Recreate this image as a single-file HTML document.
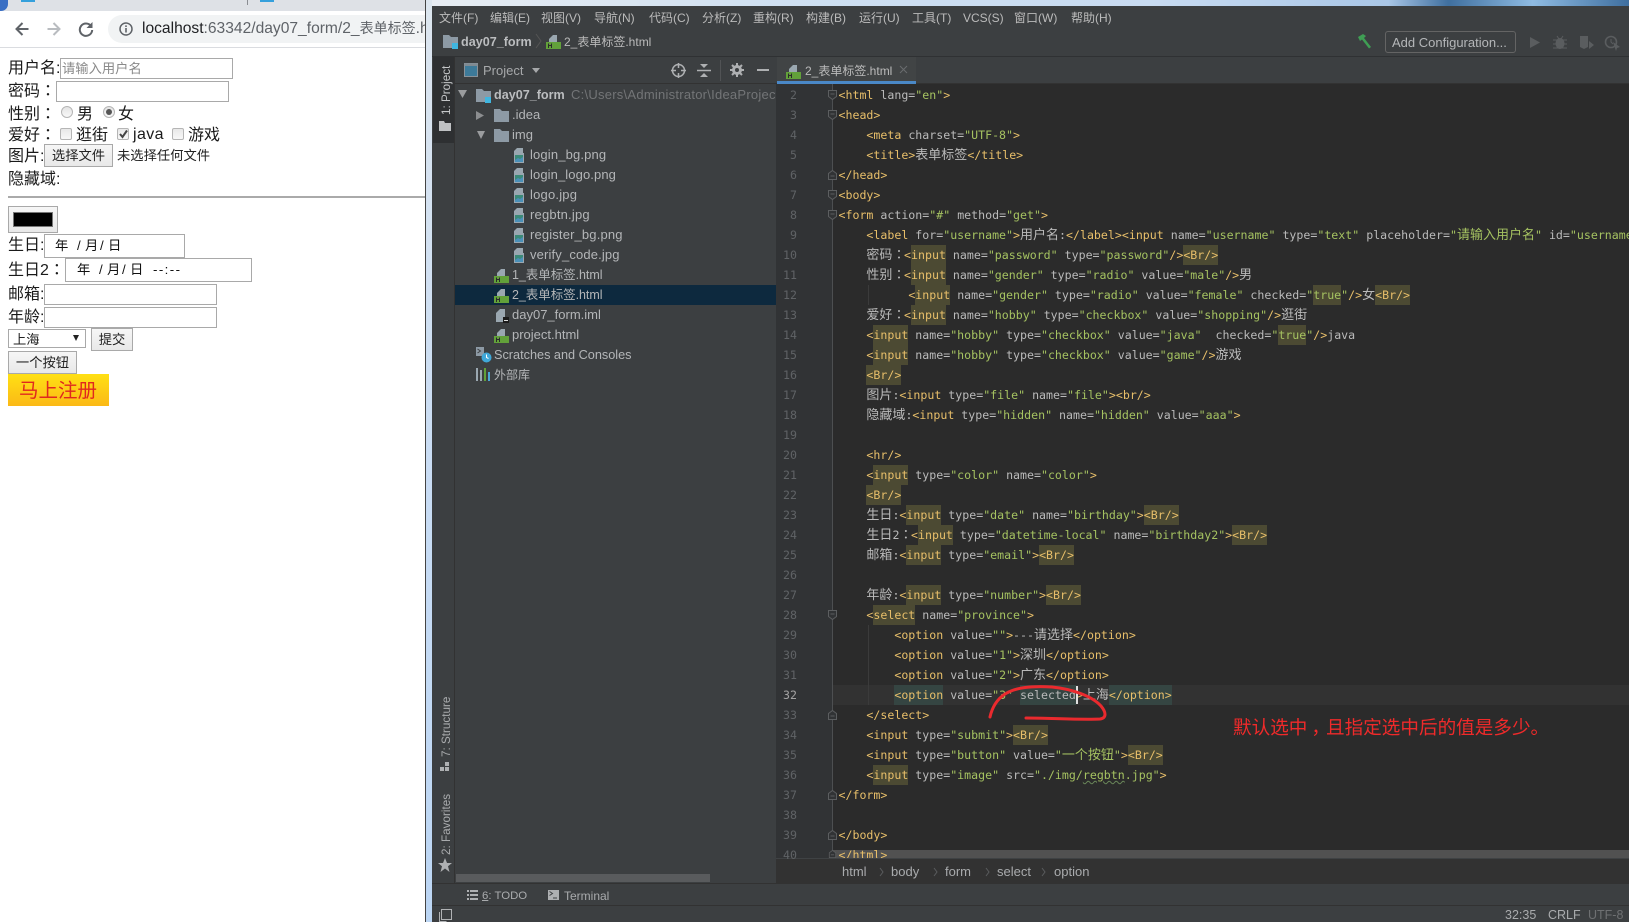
<!DOCTYPE html>
<html><head><meta charset="utf-8"><title>2_表单标签</title>
<style>
html,body{margin:0;padding:0;width:1629px;height:922px;overflow:hidden;background:#3c3f41}
div,span,svg{position:absolute}
body{font-family:"Liberation Sans","Noto Sans CJK SC",sans-serif}
#root{left:0;top:0;width:1629px;height:922px;overflow:hidden;background:#3c3f41}
.t{white-space:pre;line-height:20px;height:20px}
i{font-style:normal}
x{font-family:"Noto Sans CJK TC",sans-serif;line-height:0}
/* browser */
#br{left:0;top:0;width:426px;height:922px;background:#fff;overflow:hidden;color:#222}
.f{font-size:16px;white-space:pre;line-height:20px;height:20px;color:#1a1a1a}
.in{background:#fff;border:1px solid #a9a9a9;box-sizing:border-box}
.bt{background:linear-gradient(#f6f6f6,#e8e8e8);border:1px solid #a9a9a9;box-sizing:border-box;font-size:13.3px;text-align:center;color:#222;white-space:pre}
.rd{width:12px;height:12px;border-radius:50%;border:1px solid #b5b5b5;box-sizing:border-box;background:linear-gradient(#e4e4e4,#f8f8f8)}
.cb{width:12px;height:12px;border-radius:2px;border:1px solid #b5b5b5;box-sizing:border-box;background:linear-gradient(#e8e8e8,#f8f8f8)}
.dt{font-size:13.3px;line-height:20px;white-space:pre;color:#111}
/* ide */
.ui{font-size:12.5px;color:#afb1b3;white-space:pre;line-height:20px;height:20px}
.m{font-size:12px;top:8px;color:#bbb;white-space:pre;line-height:20px;height:20px}
.tr{font-size:13px;color:#b4b6b8;white-space:pre;line-height:20px;height:20px}
.hn{font-size:12.5px;letter-spacing:-.05px}
.sb{font-size:11.7px;color:#a9abad;white-space:pre;line-height:16px;transform-origin:0 0;transform:rotate(-90deg)}
/* code */
#cd{left:0;top:0;width:1629px;height:922px;overflow:hidden;pointer-events:none}
.l{left:838.5px;font:11.6px/20px "DejaVu Sans Mono","Noto Sans CJK SC",monospace;color:#bababa;white-space:pre;height:20px}
.ln{left:770px;width:27px;text-align:right;font:11.6px/20px "DejaVu Sans Mono",monospace;color:#606366;height:20px}
t{color:#e8bf6a}n{color:#bababa}v{color:#a5c261}
c{font:13px/0 "Noto Sans CJK SC",sans-serif;color:#bababa}
c x{letter-spacing:-1.4px}
h{background:#4c4a33;display:inline-block;height:20px;vertical-align:top}
g{background:#354542;display:inline-block;height:20px;vertical-align:top}
.fd{left:828px;width:9px;height:10px}
.ic{width:15px;height:15px}
</style></head>
<body>
<div id="root">
<svg width="0" height="0" style="left:0;top:0"><defs>
<symbol id="fo" viewBox="0 0 9 10"><path d="M.5.5h8v6l-4 3-4-3zM2.5 4h4" fill="#313335" stroke="#5c5e60"/></symbol>
<symbol id="fc" viewBox="0 0 9 10"><path d="M.5 9.500h8v-6l-4-3-4 3zM2.500 6h4" fill="#313335" stroke="#5c5e60"/></symbol>
<symbol id="hf" viewBox="0 0 15 15"><path d="M3 8V5l4-4h4v7z" fill="#9aa7b0"/><rect y="8" width="15" height="7" fill="#62a13a"/><path d="M2.500 9.500v4.500M5.500 9.500v4.500M2.500 11.500h3" stroke="#2b2b2b" stroke-width="1"/></symbol>
<symbol id="im" viewBox="0 0 15 15"><path d="M2 6V3l3-3h6v6z" fill="#9aa7b0"/><rect x="2" y="5" width="10" height="10" fill="#9aa7b0"/><rect x="3" y="7" width="8" height="7" fill="#3b8a78"/><path d="M3 12l3-2 2 1 3-2v5H3z" fill="#4a90b8"/></symbol>
<symbol id="fl" viewBox="0 0 15 15"><path d="M0 1h6l2 2h7v11H0z" fill="#8d9aa5"/></symbol>
</defs></svg>
<!-- browser window -->
<div id="br">
 <div style="left:0;top:0;width:426px;height:11px;background:#dee1e6"></div>
 <div style="left:-6px;top:-6px;width:14px;height:17px;background:#3a6fc4;border-radius:0 0 7px 0"></div>
 <div style="left:21px;top:0;width:14px;height:2px;background:#35a0dc"></div>
 <div style="left:260px;top:0;width:14px;height:2px;background:#35a0dc"></div>
 <div style="left:247px;top:0;width:1px;height:5px;background:#8a8d92"></div>
 <div style="left:0;top:47px;width:426px;height:1px;background:#dadce0"></div>
 <svg style="left:14px;top:21px" width="16" height="16" viewBox="0 0 16 16"><path d="M14.5 8H2.5M8.5 2L2.5 8l6 6" fill="none" stroke="#5f6368" stroke-width="2"/></svg>
 <svg style="left:46px;top:21px" width="16" height="16" viewBox="0 0 16 16"><path d="M1.5 8h12M7.5 2l6 6-6 6" fill="none" stroke="#b9bcc0" stroke-width="2"/></svg>
 <svg style="left:78px;top:21px" width="16" height="16" viewBox="0 0 16 16"><path d="M13 5A6.2 6.2 0 1 0 14.2 9" fill="none" stroke="#5f6368" stroke-width="2"/><path d="M14.5 1v6h-6z" fill="#5f6368"/></svg>
 <div style="left:108px;top:15px;width:330px;height:28px;border-radius:14px;background:#f1f3f4"></div>
 <svg style="left:119px;top:22px" width="14" height="14" viewBox="0 0 14 14"><circle cx="7" cy="7" r="6" fill="none" stroke="#5f6368" stroke-width="1.5"/><path d="M7 6v4.5M7 3.4v1.6" stroke="#5f6368" stroke-width="1.6"/></svg>
 <div style="left:142px;top:17px;font-size:15.6px;line-height:24px;color:#202124;white-space:pre;width:284px;overflow:hidden;height:24px">localhost<span style="position:static;color:#5f6368">:63342/day07_form/2_<i style="font-size:14px;line-height:0">表单标签</i>.html</span></div>

 <div class="f" style="left:8px;top:59px">用户名:</div>
 <div class="in" style="left:60px;top:58px;width:173px;height:21px"></div>
 <div style="left:62px;top:58px;font-size:13.3px;line-height:21px;color:#8a8a8a;white-space:pre">请输入用户名</div>
 <div class="f" style="left:8px;top:82px">密码<x>：</x></div>
 <div class="in" style="left:56px;top:81px;width:173px;height:21px"></div>
 <div class="f" style="left:8px;top:105px">性别<x>：</x></div>
 <div class="rd" style="left:61px;top:106px"></div>
 <div class="f" style="left:77px;top:105px">男</div>
 <div class="rd" style="left:103px;top:106px"></div>
 <div style="left:106px;top:109px;width:6px;height:6px;border-radius:50%;background:#555"></div>
 <div class="f" style="left:118px;top:105px">女</div>
 <div class="f" style="left:8px;top:126px">爱好<x>：</x></div>
 <div class="cb" style="left:60px;top:128px"></div>
 <div class="f" style="left:76px;top:126px">逛街</div>
 <div class="cb" style="left:117px;top:128px"></div>
 <svg style="left:118px;top:129px" width="11" height="10" viewBox="0 0 11 10"><path d="M2 5l2.5 3L9 1.5" fill="none" stroke="#444" stroke-width="2"/></svg>
 <div class="f" style="left:133px;top:125px;letter-spacing:.4px">java</div>
 <div class="cb" style="left:172px;top:128px"></div>
 <div class="f" style="left:188px;top:126px">游戏</div>
 <div class="f" style="left:8px;top:147px">图片:</div>
 <div class="bt" style="left:44px;top:144px;width:69px;height:23px;line-height:22px">选择文件</div>
 <div style="left:117px;top:146px;font-size:13.3px;line-height:20px;white-space:pre;color:#222">未选择任何文件</div>
 <div class="f" style="left:8px;top:170px">隐藏域:</div>
 <div style="left:8px;top:196px;width:418px;height:2px;background:#aaa"></div>
 <div class="bt" style="left:8px;top:206px;width:50px;height:27px"></div>
 <div style="left:13px;top:212px;width:40px;height:15px;background:#000;border:1px solid #777;box-sizing:border-box"></div>
 <div class="f" style="left:8px;top:236px">生日:</div>
 <div class="in" style="left:44px;top:234px;width:141px;height:24px"></div>
 <div class="dt" style="left:55px;top:236px">年</div><div class="dt" style="left:77px;top:236px">/</div><div class="dt" style="left:85px;top:236px">月</div><div class="dt" style="left:100px;top:236px">/</div><div class="dt" style="left:108px;top:236px">日</div>
 <div class="f" style="left:8px;top:261px">生日2<x>：</x></div>
 <div class="in" style="left:65px;top:258px;width:187px;height:24px"></div>
 <div class="dt" style="left:77px;top:260px">年</div><div class="dt" style="left:99px;top:260px">/</div><div class="dt" style="left:107px;top:260px">月</div><div class="dt" style="left:122px;top:260px">/</div><div class="dt" style="left:130px;top:260px">日</div><div class="dt" style="left:153px;top:260px;letter-spacing:1.4px">--:--</div>
 <div class="f" style="left:8px;top:285px">邮箱:</div>
 <div class="in" style="left:44px;top:284px;width:173px;height:21px"></div>
 <div class="f" style="left:8px;top:308px">年龄:</div>
 <div class="in" style="left:44px;top:307px;width:173px;height:21px"></div>
 <div class="in" style="left:8px;top:329px;width:78px;height:19px"></div>
 <div style="left:13px;top:330px;font-size:13.3px;line-height:19px;white-space:pre;color:#222">上海</div>
 <svg style="left:73px;top:335px" width="6" height="6" viewBox="0 0 6 6"><path d="M0 0h6L3 6z" fill="#222"/></svg>
 <div class="bt" style="left:91px;top:328px;width:42px;height:23px;line-height:22px">提交</div>
 <div class="bt" style="left:8px;top:351px;width:69px;height:23px;line-height:22px">一个按钮</div>
 <div style="left:8px;top:374px;width:101px;height:32px;background:linear-gradient(#ffe014,#fbb916)"></div>
 <div style="left:19px;top:375px;font-size:19.5px;line-height:32px;color:#e0281e;white-space:pre">马上注册</div>
 <div style="left:425px;top:0;width:1px;height:922px;background:#444"></div>
</div>
<!-- backdrop sliver -->
<div style="left:426px;top:0;width:1203px;height:6px;background:linear-gradient(90deg,#e8edf3,#cfe0f2 30%,#c9dcf2 60%,#a9c6e6 80%,#3f6f9f 85%,#8fbbe2 92%,#3f6f9f)"></div>
<div style="left:426px;top:0;width:6px;height:922px;background:linear-gradient(#dde6ef,#c8dcf4 55%,#bcd6f4)"></div>
<!-- IDE chrome -->
<div style="left:432px;top:6px;width:1197px;height:916px;background:#3c3f41"></div>
<div class="m" style="left:439px;top:8px">文件(F)</div>
<div class="m" style="left:490px;top:8px">编辑(E)</div>
<div class="m" style="left:541px;top:8px">视图(V)</div>
<div class="m" style="left:594px;top:8px">导航(N)</div>
<div class="m" style="left:649px;top:8px">代码(C)</div>
<div class="m" style="left:702px;top:8px">分析(Z)</div>
<div class="m" style="left:753px;top:8px">重构(R)</div>
<div class="m" style="left:806px;top:8px">构建(B)</div>
<div class="m" style="left:859px;top:8px">运行(U)</div>
<div class="m" style="left:912px;top:8px">工具(T)</div>
<div class="m" style="left:963px;top:8px">VCS(S)</div>
<div class="m" style="left:1014px;top:8px">窗口(W)</div>
<div class="m" style="left:1071px;top:8px">帮助(H)</div>

<!-- breadcrumb -->
<svg class="ic" style="left:443px;top:34px" viewBox="0 0 15 15"><path d="M0 1h6l2 2h7v11H0z" fill="#8d9aa5"/><rect x="9" y="9" width="6" height="6" fill="#40b6e0"/></svg>
<div class="ui" style="left:461px;top:32px;font-weight:bold;font-size:12.6px;color:#bbbdbf">day07_form</div>
<svg style="left:535px;top:33px" width="7" height="16" viewBox="0 0 7 16"><path d="M1 1l5 7-5 7" fill="none" stroke="#555" stroke-width="1"/></svg>
<svg class="ic" style="left:546px;top:34px"><use href="#hf"/></svg>
<div class="ui" style="left:564px;top:32px;font-size:12px;color:#bbb">2_表单标签.html</div>
<div style="left:432px;top:56px;width:1197px;height:1px;background:#2f3133"></div>
<!-- right toolbar -->
<svg style="left:1357px;top:33px" width="16" height="17" viewBox="0 0 16 17"><path d="M1 4l5-3 3 2-2 2 7 9-2 1.5-7-9-2 1.5z" fill="#3f9e54"/></svg>
<div style="left:1385px;top:31px;width:131px;height:22px;border:1px solid #646464;border-radius:3px;box-sizing:border-box"></div>
<div class="ui" style="left:1392px;top:33px;font-size:13px;color:#b5b7b9">Add Configuration...</div>
<svg style="left:1530px;top:36px" width="11" height="13" viewBox="0 0 11 13"><path d="M0 1l10 5.5L0 12z" fill="#5a5d5f"/></svg>
<svg style="left:1553px;top:35px" width="14" height="15" viewBox="0 0 14 15"><ellipse cx="7" cy="8.5" rx="4.5" ry="5.5" fill="#5a5d5f"/><path d="M0 5h14M0 9h14M0 13h14M4 1l2 3M10 1L8 4" stroke="#5a5d5f"/></svg>
<svg style="left:1579px;top:35px" width="16" height="15" viewBox="0 0 16 15"><path d="M1 1h8v11l-4 2-4-2z" fill="#5a5d5f"/><path d="M10 6l5 4-5 4z" fill="#5a5d5f"/></svg>
<svg style="left:1604px;top:35px" width="17" height="16" viewBox="0 0 17 16"><circle cx="7" cy="7" r="5.5" fill="none" stroke="#5a5d5f" stroke-width="1.6"/><path d="M7 4v3l2 2" stroke="#5a5d5f" fill="none"/><path d="M9 7l7 5-3 1-1 3z" fill="#5a5d5f"/></svg>

<!-- left stripe -->
<div style="left:454px;top:57px;width:1px;height:826px;background:#323232"></div>
<div style="left:433px;top:57px;width:21px;height:86px;background:#2e3032"></div>
<div class="sb" style="left:438.5px;top:115px;color:#c5c7c9;width:60px">1: Project</div>
<svg style="left:439px;top:121px" width="12" height="10" viewBox="0 0 12 10"><path d="M0 0h5l1 2h6v8H0z" fill="#bfc1c3"/></svg>
<div class="sb" style="left:438.5px;top:757px;width:70px">7: Structure</div>
<svg style="left:440px;top:761px" width="10" height="10" viewBox="0 0 10 10"><path d="M0 6h4v4H0zM5 6h4v4H5zM5 1h4v4H5z" fill="#aeb0b2"/></svg>
<div class="sb" style="left:438.5px;top:855px;width:70px">2: Favorites</div>
<svg style="left:438px;top:858px" width="14" height="14" viewBox="0 0 14 14"><path d="M7 0l2 5h5l-4 3.2L11.500 14 7 10.500 2.500 14 4 8.200 0 5h5z" fill="#aeb0b2"/></svg>

<!-- project panel -->
<svg style="left:464px;top:63px" width="14" height="14" viewBox="0 0 14 14"><rect x=".5" y=".5" width="13" height="13" fill="#3d7a99" stroke="#8a9299"/><rect x=".5" y=".5" width="13" height="2.500" fill="#7f8a92"/></svg>
<div class="ui" style="left:483px;top:61px;font-size:13px;color:#a6a8aa">Project</div>
<svg style="left:532px;top:68px" width="8" height="5" viewBox="0 0 8 5"><path d="M0 0h8L4 5z" fill="#a6a8aa"/></svg>
<svg style="left:671px;top:63px" width="15" height="15" viewBox="0 0 15 15"><circle cx="7.500" cy="7.500" r="6" fill="none" stroke="#aeb0b2" stroke-width="1.500"/><path d="M7.500 0v5M7.500 10v5M0 7.500h5M10 7.500h5" stroke="#aeb0b2" stroke-width="1.500"/></svg>
<svg style="left:697px;top:63px" width="14" height="15" viewBox="0 0 14 15"><path d="M0 7.500h14" stroke="#aeb0b2" stroke-width="1.500"/><path d="M7 5L3 1h8zM7 10l-4 4h8z" fill="#aeb0b2"/></svg>
<div style="left:720px;top:60px;width:1px;height:21px;background:#515355"></div>
<svg style="left:730px;top:63px" width="14" height="14" viewBox="0 0 14 14"><circle cx="7" cy="7" r="3.500" fill="none" stroke="#aeb0b2" stroke-width="3"/><path d="M7 0v3M7 11v3M0 7h3M11 7h3M2 2l2 2M10 10l2 2M2 12l2-2M10 4l2-2" stroke="#aeb0b2" stroke-width="2"/></svg>
<div style="left:757px;top:69px;width:12px;height:2px;background:#aeb0b2"></div>
<div style="left:455px;top:83px;width:1174px;height:1px;background:#323232"></div>

<svg style="left:458px;top:90px" width="9" height="8" viewBox="0 0 9 8"><path d="M0 0h9L4.500 8z" fill="#9a9c9e"/></svg>
<svg class="ic" style="left:476px;top:88px" viewBox="0 0 15 15"><path d="M0 1h6l2 2h7v11H0z" fill="#8d9aa5"/><rect x="9" y="9" width="6" height="6" fill="#40b6e0"/></svg>
<div class="tr" style="left:494px;top:85px;font-weight:bold;color:#bbbdbf;font-size:12.6px">day07_form</div>
<div class="tr" style="left:571px;top:85px;color:#737577;width:205px;overflow:hidden;letter-spacing:.25px;font-size:13px">C:\Users\Administrator\IdeaProjects</div>
<svg style="left:476px;top:111px" width="8" height="9" viewBox="0 0 8 9"><path d="M0 0l8 4.500L0 9z" fill="#8c8e90"/></svg>
<svg class="ic" style="left:494px;top:108px"><use href="#fl"/></svg>
<div class="tr" style="left:512px;top:105px">.idea</div>
<svg style="left:477px;top:131px" width="8" height="8" viewBox="0 0 8 8"><path d="M0 0h8L4 8z" fill="#9a9c9e"/></svg>
<svg class="ic" style="left:494px;top:128px"><use href="#fl"/></svg>
<div class="tr" style="left:512px;top:125px">img</div>
<!-- image files -->
<svg class="ic" style="left:512px;top:148px"><use href="#im"/></svg>
<div class="tr" style="left:530px;top:145px;letter-spacing:.15px">login_bg.png</div>
<svg class="ic" style="left:512px;top:168px"><use href="#im"/></svg>
<div class="tr" style="left:530px;top:165px;letter-spacing:.1px">login_logo.png</div>
<svg class="ic" style="left:512px;top:188px"><use href="#im"/></svg>
<div class="tr" style="left:530px;top:185px;letter-spacing:.2px">logo.jpg</div>
<svg class="ic" style="left:512px;top:208px"><use href="#im"/></svg>
<div class="tr" style="left:530px;top:205px;letter-spacing:.2px">regbtn.jpg</div>
<svg class="ic" style="left:512px;top:228px"><use href="#im"/></svg>
<div class="tr" style="left:530px;top:225px;letter-spacing:.15px">register_bg.png</div>
<svg class="ic" style="left:512px;top:248px"><use href="#im"/></svg>
<div class="tr" style="left:530px;top:245px;letter-spacing:.15px">verify_code.jpg</div>
<!-- html files -->
<svg class="ic" style="left:494px;top:268px"><use href="#hf"/></svg>
<div class="tr hn" style="left:512px;top:265px">1_表单标签.html</div>
<div style="left:455px;top:285px;width:321px;height:20px;background:#0d293e"></div>
<svg class="ic" style="left:494px;top:288px"><use href="#hf"/></svg>
<div class="tr hn" style="left:512px;top:285px">2_表单标签.html</div>
<svg class="ic" style="left:496px;top:308px" viewBox="0 0 15 15"><path d="M0 14V5l4-4h5v13z" fill="#9aa7b0"/><rect x="7" y="9" width="6" height="6" fill="#1b1b1b"/><rect x="8" y="12" width="4" height="1" fill="#ddd"/></svg>
<div class="tr" style="left:512px;top:305px">day07_form.iml</div>
<svg class="ic" style="left:494px;top:328px"><use href="#hf"/></svg>
<div class="tr" style="left:512px;top:325px">project.html</div>
<svg style="left:476px;top:347px" width="16" height="16" viewBox="0 0 16 16"><path d="M0 0h8v9H0z" fill="#8d9aa5"/><path d="M1.500 2l3 2-3 2" stroke="#3c3f41" fill="none"/><circle cx="10.500" cy="10.500" r="5" fill="#40a8d8"/><path d="M10.500 7.500v3l2 1" stroke="#fff" fill="none"/></svg>
<div class="tr" style="left:494px;top:345px;font-size:12.7px">Scratches and Consoles</div>
<svg style="left:476px;top:368px" width="15" height="13" viewBox="0 0 15 13"><path d="M1 0v13M5 2v11" stroke="#9aa7b0" stroke-width="2"/><path d="M9 0v13" stroke="#62a13a" stroke-width="2"/><path d="M13 4v9" stroke="#4aa8d8" stroke-width="2"/></svg>
<div class="tr" style="left:494px;top:365px;font-size:12px">外部库</div>
<div style="left:456px;top:874px;width:254px;height:8px;background:#595b5d"></div>

<!-- tab bar -->
<div style="left:776px;top:57px;width:853px;height:26px;background:#3c3f41"></div>
<div style="left:777px;top:57px;width:139px;height:24px;background:#4e5254;opacity:.28"></div>
<div style="left:777px;top:81px;width:139px;height:3px;background:#4a88c7"></div>
<svg class="ic" style="left:786px;top:64px"><use href="#hf"/></svg>
<div class="ui" style="left:805px;top:61px;color:#bbb;font-size:12px">2_表单标签.html</div>
<svg style="left:899px;top:65px" width="9" height="9" viewBox="0 0 9 9"><path d="M1 1l7 7M8 1L1 8" stroke="#6a6c6e" stroke-width="1"/></svg>

<!-- editor -->
<div style="left:776px;top:84px;width:853px;height:775px;background:#2b2b2b"></div>
<div style="left:776px;top:84px;width:56px;height:775px;background:#313335"></div>
<div style="left:832px;top:84px;width:1px;height:775px;background:#4d4f51"></div>
<div style="left:833px;top:685px;width:796px;height:20px;background:#323232"></div>
<div style="left:868px;top:285px;width:1px;height:20px;background:#3b3b3b"></div>
<div style="left:868px;top:625px;width:1px;height:80px;background:#3b3b3b"></div>
<div style="left:776px;top:859px;width:853px;height:25px;background:#323232"></div>
<div style="left:832px;top:850px;width:797px;height:8px;background:#515151"></div>
<div style="left:776px;top:858px;width:853px;height:1px;background:#3f4244"></div>
<div style="left:432px;top:883px;width:1197px;height:1px;background:#323232"></div>
<div style="left:432px;top:905px;width:1197px;height:1px;background:#323232"></div>

<div id="cd">
<svg class="fd" style="top:90px"><use href="#fo"/></svg><svg class="fd" style="top:110px"><use href="#fo"/></svg><svg class="fd" style="top:170px"><use href="#fc"/></svg><svg class="fd" style="top:190px"><use href="#fo"/></svg><svg class="fd" style="top:210px"><use href="#fo"/></svg><svg class="fd" style="top:610px"><use href="#fo"/></svg><svg class="fd" style="top:710px"><use href="#fc"/></svg><svg class="fd" style="top:790px"><use href="#fc"/></svg><svg class="fd" style="top:830px"><use href="#fc"/></svg><svg class="fd" style="top:850px;height:8px"><use href="#fc"/></svg>

<div class="ln" style="top:85px">2</div><div class="ln" style="top:105px">3</div><div class="ln" style="top:125px">4</div><div class="ln" style="top:145px">5</div><div class="ln" style="top:165px">6</div><div class="ln" style="top:185px">7</div><div class="ln" style="top:205px">8</div><div class="ln" style="top:225px">9</div><div class="ln" style="top:245px">10</div><div class="ln" style="top:265px">11</div><div class="ln" style="top:285px">12</div><div class="ln" style="top:305px">13</div><div class="ln" style="top:325px">14</div><div class="ln" style="top:345px">15</div><div class="ln" style="top:365px">16</div><div class="ln" style="top:385px">17</div><div class="ln" style="top:405px">18</div><div class="ln" style="top:425px">19</div><div class="ln" style="top:445px">20</div><div class="ln" style="top:465px">21</div><div class="ln" style="top:485px">22</div><div class="ln" style="top:505px">23</div><div class="ln" style="top:525px">24</div><div class="ln" style="top:545px">25</div><div class="ln" style="top:565px">26</div><div class="ln" style="top:585px">27</div><div class="ln" style="top:605px">28</div><div class="ln" style="top:625px">29</div><div class="ln" style="top:645px">30</div><div class="ln" style="top:665px">31</div><div class="ln" style="top:685px;color:#a4a3a3">32</div><div class="ln" style="top:705px">33</div><div class="ln" style="top:725px">34</div><div class="ln" style="top:745px">35</div><div class="ln" style="top:765px">36</div><div class="ln" style="top:785px">37</div><div class="ln" style="top:805px">38</div><div class="ln" style="top:825px">39</div><div class="ln" style="top:845px;height:14px;overflow:hidden">40</div>

<div class="l" style="top:85px"><t>&lt;html</t> <n>lang=</n><v>"en"</v><t>&gt;</t></div>
<div class="l" style="top:105px"><t>&lt;head&gt;</t></div>
<div class="l" style="top:125px">    <t>&lt;meta</t> <n>charset=</n><v>"UTF-8"</v><t>&gt;</t></div>
<div class="l" style="top:145px">    <t>&lt;title&gt;</t><c>表单标签</c><t>&lt;/title&gt;</t></div>
<div class="l" style="top:165px"><t>&lt;/head&gt;</t></div>
<div class="l" style="top:185px"><t>&lt;body&gt;</t></div>
<div class="l" style="top:205px"><t>&lt;form</t> <n>action=</n><v>"#"</v> <n>method=</n><v>"get"</v><t>&gt;</t></div>
<div class="l" style="top:225px">    <t>&lt;label</t> <n>for=</n><v>"username"</v><t>&gt;</t><c>用户名</c>:<t>&lt;/label&gt;&lt;input</t> <n>name=</n><v>"username"</v> <n>type=</n><v>"text"</v> <n>placeholder=</n><v>"<c style="color:#a5c261">请输入用户名</c>"</v> <n>id=</n><v>"username"/&gt;</v></div>
<div class="l" style="top:245px">    <c>密码<x>：</x></c><t>&lt;<h>input</h></t> <n>name=</n><v>"password"</v> <n>type=</n><v>"password"</v><t>/&gt;<h>&lt;Br/&gt;</h></t></div>
<div class="l" style="top:265px">    <c>性别<x>：</x></c><t>&lt;<h>input</h></t> <n>name=</n><v>"gender"</v> <n>type=</n><v>"radio"</v> <n>value=</n><v>"male"</v><t>/&gt;</t><c>男</c></div>
<div class="l" style="top:285px">          <t>&lt;<h>input</h></t> <n>name=</n><v>"gender"</v> <n>type=</n><v>"radio"</v> <n>value=</n><v>"female"</v> <n>checked=</n><v>"<h>true</h>"</v><t>/&gt;</t><c>女</c><t><h>&lt;Br/&gt;</h></t></div>
<div class="l" style="top:305px">    <c>爱好<x>：</x></c><t>&lt;<h>input</h></t> <n>name=</n><v>"hobby"</v> <n>type=</n><v>"checkbox"</v> <n>value=</n><v>"shopping"</v><t>/&gt;</t><c>逛街</c></div>
<div class="l" style="top:325px">    <t>&lt;<h>input</h></t> <n>name=</n><v>"hobby"</v> <n>type=</n><v>"checkbox"</v> <n>value=</n><v>"java"</v>  <n>checked=</n><v>"<h>true</h>"</v><t>/&gt;</t>java</div>
<div class="l" style="top:345px">    <t>&lt;<h>input</h></t> <n>name=</n><v>"hobby"</v> <n>type=</n><v>"checkbox"</v> <n>value=</n><v>"game"</v><t>/&gt;</t><c>游戏</c></div>
<div class="l" style="top:365px">    <t><h>&lt;Br/&gt;</h></t></div>
<div class="l" style="top:385px">    <c>图片</c>:<t>&lt;input</t> <n>type=</n><v>"file"</v> <n>name=</n><v>"file"</v><t>&gt;&lt;br/&gt;</t></div>
<div class="l" style="top:405px">    <c>隐藏域</c>:<t>&lt;input</t> <n>type=</n><v>"hidden"</v> <n>name=</n><v>"hidden"</v> <n>value=</n><v>"aaa"</v><t>&gt;</t></div>
<div class="l" style="top:445px">    <t>&lt;hr/&gt;</t></div>
<div class="l" style="top:465px">    <t>&lt;<h>input</h></t> <n>type=</n><v>"color"</v> <n>name=</n><v>"color"</v><t>&gt;</t></div>
<div class="l" style="top:485px">    <t><h>&lt;Br/&gt;</h></t></div>
<div class="l" style="top:505px">    <c>生日</c>:<t>&lt;<h>input</h></t> <n>type=</n><v>"date"</v> <n>name=</n><v>"birthday"</v><t>&gt;<h>&lt;Br/&gt;</h></t></div>
<div class="l" style="top:525px">    <c>生日</c>2<c><x>：</x></c><t>&lt;<h>input</h></t> <n>type=</n><v>"datetime-local"</v> <n>name=</n><v>"birthday2"</v><t>&gt;<h>&lt;Br/&gt;</h></t></div>
<div class="l" style="top:545px">    <c>邮箱</c>:<t>&lt;<h>input</h></t> <n>type=</n><v>"email"</v><t>&gt;<h>&lt;Br/&gt;</h></t></div>
<div class="l" style="top:585px">    <c>年龄</c>:<t>&lt;<h>input</h></t> <n>type=</n><v>"number"</v><t>&gt;<h>&lt;Br/&gt;</h></t></div>
<div class="l" style="top:605px">    <t>&lt;<h>select</h></t> <n>name=</n><v>"province"</v><t>&gt;</t></div>
<div class="l" style="top:625px">        <t>&lt;option</t> <n>value=</n><v>""</v><t>&gt;</t>---<c>请选择</c><t>&lt;/option&gt;</t></div>
<div class="l" style="top:645px">        <t>&lt;option</t> <n>value=</n><v>"1"</v><t>&gt;</t><c>深圳</c><t>&lt;/option&gt;</t></div>
<div class="l" style="top:665px">        <t>&lt;option</t> <n>value=</n><v>"2"</v><t>&gt;</t><c>广东</c><t>&lt;/option&gt;</t></div>
<div class="l" style="top:685px">        <t><g>&lt;option</g></t> <n>value=</n><v>"3"</v> <n><g>selected</g></n><t>&gt;</t><c>上海</c><t><g>&lt;/option&gt;</g></t></div>
<div class="l" style="top:705px">    <t>&lt;/select&gt;</t></div>
<div class="l" style="top:725px">    <t>&lt;input</t> <n>type=</n><v>"submit"</v><t>&gt;<h>&lt;Br/&gt;</h></t></div>
<div class="l" style="top:745px">    <t>&lt;input</t> <n>type=</n><v>"button"</v> <n>value=</n><v>"<c style="color:#a5c261">一个按钮</c>"</v><t>&gt;<h>&lt;Br/&gt;</h></t></div>
<div class="l" style="top:765px">    <t>&lt;<h>input</h></t> <n>type=</n><v>"image"</v> <n>src=</n><v>"./img/<span style="position:static;text-decoration:underline wavy #6a8759 1px">regbtn</span>.jpg"</v><t>&gt;</t></div>
<div class="l" style="top:785px"><t>&lt;/form&gt;</t></div>
<div class="l" style="top:825px"><t>&lt;/body&gt;</t></div>
<div class="l" style="top:845px;height:13px;overflow:hidden"><t>&lt;/html&gt;</t></div>
<div style="left:1076px;top:686px;width:1.500px;height:18px;background:#e0e0e0"></div>
</div>

<!-- scribble and annotation -->
<svg style="left:0;top:0" width="1629" height="922" viewBox="0 0 1629 922"><path d="M990 717C992 708 996 700 1005 694 1016 687 1032 686 1052 687 1072 689 1092 696 1101 706 1106 712 1107 718 1100 719 1080 720 1050 718 1026 718" fill="none" stroke="#ea2a2e" stroke-width="3" stroke-linecap="round"/></svg>
<div style="left:1233px;top:716px;font-size:18.600px;line-height:24px;color:#f02a2a;white-space:pre">默认选中<span style="position:relative;left:4px">，</span>且指定选中后的值是多少。</div>

<!-- breadcrumbs -->
<div class="ui" style="left:842px;top:862px;color:#a9abad;font-size:13px">html</div>
<div class="ui" style="left:891px;top:862px;color:#a9abad;font-size:13px">body</div>
<div class="ui" style="left:945px;top:862px;color:#a9abad;font-size:13px">form</div>
<div class="ui" style="left:997px;top:862px;color:#a9abad;font-size:13px">select</div>
<div class="ui" style="left:1054px;top:862px;color:#a9abad;font-size:13px">option</div>
<svg style="left:879px;top:867px" width="5" height="10" viewBox="0 0 5 10"><path d="M1 1l3 4-3 4" fill="none" stroke="#5a5c5e"/></svg>
<svg style="left:933px;top:867px" width="5" height="10" viewBox="0 0 5 10"><path d="M1 1l3 4-3 4" fill="none" stroke="#5a5c5e"/></svg>
<svg style="left:985px;top:867px" width="5" height="10" viewBox="0 0 5 10"><path d="M1 1l3 4-3 4" fill="none" stroke="#5a5c5e"/></svg>
<svg style="left:1041px;top:867px" width="5" height="10" viewBox="0 0 5 10"><path d="M1 1l3 4-3 4" fill="none" stroke="#5a5c5e"/></svg>

<!-- bottom tool bar -->
<svg style="left:467px;top:890px" width="11" height="11" viewBox="0 0 11 11"><path d="M0 1h2M0 5h2M0 9h2M3 1h8M3 5h8M3 9h8" stroke="#aeb0b2" stroke-width="2"/></svg>
<div class="ui" style="left:482px;top:886px;color:#a9abad;font-size:11.4px"><span style="position:static;text-decoration:underline">6</span>: TODO</div>
<svg style="left:548px;top:890px" width="11" height="10" viewBox="0 0 11 10"><rect width="11" height="10" fill="#aeb0b2"/><path d="M1.500 1.500l3 2-3 2M5 8h4" stroke="#3c3f41" fill="none"/></svg>
<div class="ui" style="left:564px;top:886px;color:#a9abad;font-size:12px">Terminal</div>
<svg style="left:439px;top:909px" width="13" height="13" viewBox="0 0 13 13"><rect x="2.500" y=".5" width="10" height="10" fill="none" stroke="#b0b2b4"/><path d="M.5 3v9.500h7" fill="none" stroke="#b0b2b4"/></svg>
<!-- status -->
<div class="ui" style="left:1505px;top:905px;color:#a9abad">32:35</div>
<div class="ui" style="left:1548px;top:905px;color:#a9abad">CRLF</div>
<div class="ui" style="left:1588px;top:905px;color:#6e7072">UTF-8</div>
</div>
</body></html>
